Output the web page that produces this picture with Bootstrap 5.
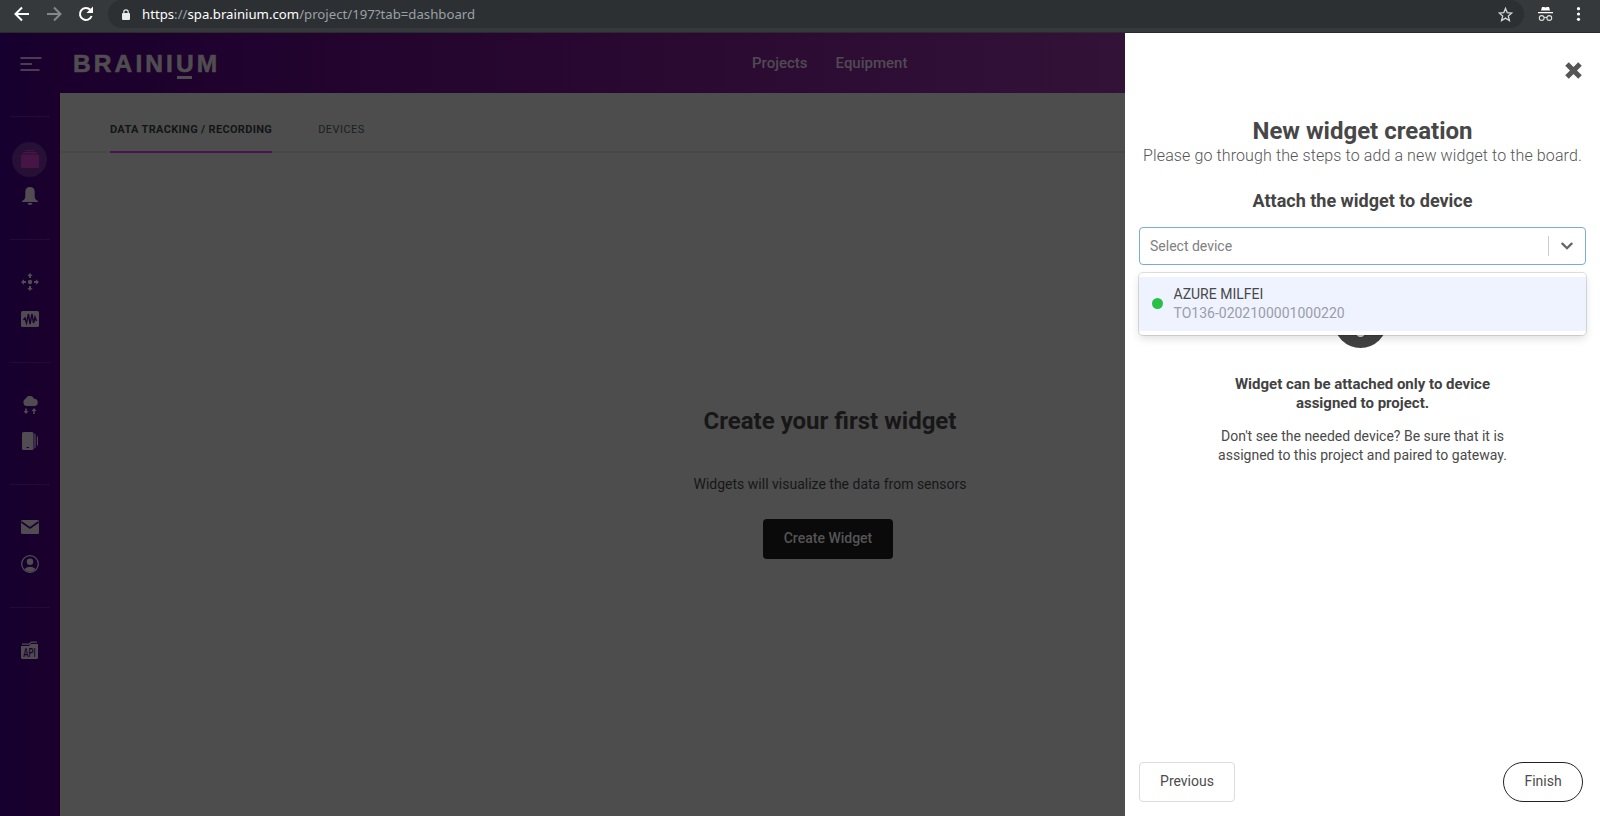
<!DOCTYPE html>
<html lang="en">
<head>
<meta charset="utf-8">
<title>Brainium</title>
<link rel="stylesheet" href="https://cdn.jsdelivr.net/npm/bootstrap@5.3.0/dist/css/bootstrap.min.css">
<script src="https://cdn.jsdelivr.net/npm/bootstrap@5.3.0/dist/js/bootstrap.bundle.min.js"></script>
<style>
body{font-family:Roboto,sans-serif;font-size:14px;color:#424242;height:816px;background:#4d4d4d}
svg{display:block;flex:none}
.browser{height:33px;background:#36393b;border-bottom:1px solid #2a2b2a;padding:0 14px 4px 14px}
.omni{background:#2d3033;height:28px;border-radius:14px;margin-left:14px;padding:0 11px 0 14px;width:1416px}
.url{font:13.2px/28px "Noto Sans",sans-serif;color:#9aa0a6;margin-left:12px;white-space:nowrap}
.url b{font-weight:400;color:#fff}
.incognito{margin-left:14px}
.rail{width:60px;background:linear-gradient(90deg,#16002f,#1b002c)}
.rail-top{height:83px;padding:24px 0 0 2px}
.rail-group{height:123px;width:40px;border-top:1px solid #230b35;padding-top:24px}
.rail-group.short{height:122px}
.rail-item{height:36px;margin-bottom:1px}
.on{width:35px;height:35px;background:#261036;border-radius:50%;margin-right:1px}
.topbar{height:60px;background:linear-gradient(90deg,#1b002d,#27072f 45%,#331238);padding-left:13px}
.brand-name{font:700 24.500px/30px "Liberation Sans",sans-serif;color:#504d51;-webkit-text-stroke:.6px #504d51;letter-spacing:3.100px;width:146px;padding-top:1px}
.u-line{position:relative}
.u-line::after{content:"";position:absolute;left:1px;width:15px;bottom:-2px;height:2.5px;background:#504d51}
.top-nav{margin-left:533px;gap:28px}
.top-link{font-size:15px;font-weight:500;color:#504b52;line-height:20px}
.tabs{height:60px;border-bottom:2px solid #484848;padding-left:50px;gap:46px;font-size:11px;letter-spacing:.45px;color:#1b1e1e}
.tab{height:60px;line-height:73px;white-space:nowrap}
.tab.sel{font-weight:700;border-bottom:2px solid #461450;color:#111615;letter-spacing:.33px}
.empty{padding-top:253px;width:1540px;text-align:center;color:#171717}
.empty h1{font-size:24px;line-height:30px;font-weight:700;margin:0 0 38px}
.empty p{line-height:20px;margin:0 0 25px}
.create{background:#0a0a0a;color:#555;width:130px;height:40px;border:0;border-radius:4px;font-size:14px;font-weight:500;padding:0 0 1px;margin-right:4px}
.drawer{width:475px;flex:none;background:#fff;padding:85px 14px 14px;position:relative}
.close-x{position:absolute;right:18px;top:28.500px}
.drawer h2{font-size:24px;line-height:26px;font-weight:700;margin:0;color:#474747}
.lead-in{font-size:16px;line-height:24px;font-weight:300;color:#555;letter-spacing:.11px;white-space:nowrap;margin:0 -14px 21px}
.drawer h3{font-size:18px;line-height:24px;font-weight:700;margin:0 0 14px;color:#444}
.picker{position:relative;height:38px;border:1px solid #7aabda;border-radius:4px;padding-left:10px;color:#808080}
.picker .chev{border-left:1px solid #ccc;height:20px;width:37px}
.options{position:absolute;top:45px;left:-1px;right:-1px;height:62px;background:#fff;border-radius:4px;box-shadow:0 0 0 1px rgba(0,0,0,.12),0 4px 9px rgba(0,0,0,.12);padding:4px 0;z-index:2}
.option{background:#eff3ff;height:54px;line-height:19px;padding-left:13px;gap:10.500px}
.device-name{color:#484848}
.device-id{color:#9a9daa}
.dot{width:11px;height:11px;border-radius:50%;background:#28c048;margin-bottom:1px}
.info{margin:30px 4px 0 0}
.strong-note{font-size:15px;line-height:19px;font-weight:700;margin:27px 0 14px}
.soft-note{line-height:19px;margin:0;color:#4a4a4a}
.act{height:40px;border:1px solid #dcdcdc;border-radius:4px;background:#fff;color:#4c4c4c;font-size:14px;padding:0 0 1px;width:96px}
.act.done{border-color:#222;border-radius:20px;width:80px;margin-right:3px}
</style>
</head>
<body class="d-flex flex-column overflow-hidden">
<div class="browser d-flex align-items-center">
  <svg width="16" height="16" viewBox="0 0 16 16" fill="none" stroke="#fff" stroke-width="2"><path d="M15 8H2M8 1.500 1.500 8 8 14.500"/></svg>
  <svg class="ms-3" width="16" height="16" viewBox="0 0 16 16" fill="none" stroke="#85888a" stroke-width="2"><path d="M1 8h13M8 1.500 14.500 8 8 14.500"/></svg>
  <svg class="ms-3" width="16" height="16" viewBox="0 0 16 16" fill="none" stroke="#fff" stroke-width="2"><path d="M13.600 10a6 6 0 1 1-1.300-6.200"/><path d="M15 .5V7H8.500z" fill="#fff" stroke="none"/></svg>
  <div class="omni d-flex align-items-center">
    <svg width="8" height="11" viewBox="0 0 8 11"><rect y="4" width="8" height="7" rx="1" fill="#e8eaed"/><path d="M1.800 4.500V3a2.200 2.200 0 0 1 4.400 0v1.500" fill="none" stroke="#e8eaed" stroke-width="1.200"/></svg>
    <span class="url"><b>https</b>://<b>spa.brainium.com</b>/project/197?tab=dashboard</span>
    <svg class="ms-auto" width="15" height="15" viewBox="0 0 15 15" fill="none" stroke="#d0d3d6" stroke-width="1.300"><path d="m7.500 1.400 1.700 4.200 4.600.4-3.500 3 1.100 4.500-3.900-2.400-3.900 2.400L4.700 9 1.200 6l4.600-.4z"/></svg>
  </div>
  <svg class="incognito" width="15" height="14" viewBox="0 0 15 14"><path d="M4 0h2l1.500.6L9 0h2l1 3.500H3zM0 5h15v1.300H0z" fill="#fff"/><g fill="none" stroke="#e0e0e0" stroke-width="1.100"><circle cx="3.700" cy="11" r="2.400"/><circle cx="11.300" cy="11" r="2.400"/><path d="M6 10.700q1.500-1 3 0"/></g></svg>
  <svg class="ms-auto" width="14" height="14" viewBox="0 0 14 14" fill="#fff"><circle cx="6.500" cy="1.700" r="1.600"/><circle cx="6.500" cy="7" r="1.600"/><circle cx="6.500" cy="12.300" r="1.600"/></svg>
</div>
<div class="d-flex flex-grow-1">
  <nav class="rail d-flex flex-column align-items-center flex-shrink-0">
    <div class="rail-top">
      <svg width="22" height="14" viewBox="0 0 22 14" stroke="#5a525f" stroke-width="1.700"><path d="M.5 1h21M.5 7h11.500M.5 13h19"/></svg>
    </div>
    <div class="rail-group">
      <div class="rail-item d-flex align-items-center justify-content-center"><span class="on d-flex align-items-center justify-content-center"><svg width="18" height="18" viewBox="0 0 18 18" fill="#461445"><rect y="4.500" width="18" height="13.500" rx="1.500"/><path d="M2.500 2h13l1 1.500h-15zM5 0h8l.6 1H4.400z"/></svg></span></div>
      <div class="rail-item d-flex align-items-center justify-content-center"><svg width="16" height="18" viewBox="0 0 16 18" fill="#504c52"><path d="M8 0c3 0 4.700 2 4.700 4.500V9c0 3 1.300 4 3.300 5v1H0v-1c2-1 3.300-2 3.300-5V4.500C3.300 2 5 0 8 0zM5.500 16h5q-.5 2-2.500 2t-2.500-2z"/></svg></div>
    </div>
    <div class="rail-group">
      <div class="rail-item d-flex align-items-center justify-content-center"><svg width="18" height="18" viewBox="0 0 18 18" fill="#504c52"><circle cx="9" cy="9" r="2.200"/><path d="m9 0 2.700 3H10v2H8V3H6.300zM9 18l-2.700-3H8v-2h2v2h1.700zM0 9l3-2.700V8h2v2H3v1.700zM18 9l-3 2.700V10h-2V8h2V6.300z"/></svg></div>
      <div class="rail-item d-flex align-items-center justify-content-center"><svg width="18" height="16" viewBox="0 0 18 16"><rect width="18" height="16" rx="1.500" fill="#504c52"/><path d="m2.500 9 1.500-2 1.500 5 2-9 1.500 10 2-10 1.500 9L14 6l1.500 4" fill="none" stroke="#1b0030" stroke-width="1.400"/></svg></div>
    </div>
    <div class="rail-group short">
      <div class="rail-item d-flex align-items-center justify-content-center"><svg width="16" height="18" viewBox="0 0 16 18" fill="#504c52"><path d="M4 10a4 4 0 0 1-.2-7.500 4.500 4.500 0 0 1 8.300.3A3.600 3.600 0 0 1 12.300 10zM3.200 12.500h1.600V15h1.700L4 18l-2.500-3h1.700zM11.200 18h1.600v-3h1.700L12 12l-2.500 3h1.700z"/></svg></div>
      <div class="rail-item d-flex align-items-start justify-content-center pt-2"><svg width="16" height="18" viewBox="0 0 16 18"><rect width="11.500" height="18" rx="1.500" fill="#504c52"/><path d="M4.500 15.500h2.500" stroke="#1b0030"/><path d="M12 1.500q2 0 2 1.500v12q0 1.500-2 1.500z" fill="#3d2c49"/><path d="M15.400 4.500v9" stroke="#514958" stroke-width="1.100"/></svg></div>
    </div>
    <div class="rail-group">
      <div class="rail-item d-flex align-items-center justify-content-center"><svg width="18" height="14" viewBox="0 0 18 14"><rect width="18" height="14" rx="1.500" fill="#504c52"/><path d="m.5 2 8.500 6L17.500 2" fill="none" stroke="#1b0030" stroke-width="1.700"/></svg></div>
      <div class="rail-item d-flex align-items-center justify-content-center"><svg width="18" height="18" viewBox="0 0 18 18"><circle cx="9" cy="9" r="8.300" fill="none" stroke="#504c52" stroke-width="1.300"/><circle cx="9" cy="6.800" r="3.200" fill="#504c52"/><path d="M3.300 14q5.700-4.500 11.400 0-5.700 6-11.400 0z" fill="#504c52"/></svg></div>
    </div>
    <div class="rail-group">
      <div class="rail-item d-flex align-items-center justify-content-center"><svg width="18" height="18" viewBox="0 0 18 18"><path d="M0 5h8l2-2h7v13.500a1.500 1.500 0 0 1-1.500 1.500h-14A1.500 1.500 0 0 1 0 16.500zM1 2.500h7L10 .500h6v1.200H10.500l-2 2H1z" fill="#504c52"/><text x="2.300" y="16" textLength="12.400" lengthAdjust="spacingAndGlyphs" font-family="Roboto" font-weight="500" font-size="12" fill="#1b0030">API</text></svg></div>
    </div>
  </nav>
  <main class="flex-grow-1" style="min-width:0">
    <header class="topbar d-flex align-items-center">
      <div class="brand-name">BRAINI<span class="u-line">U</span>M</div>
      <div class="top-nav top-link d-flex"><span>Projects</span><span>Equipment</span></div>
    </header>
    <div class="tabs d-flex"><span class="tab sel">DATA TRACKING / RECORDING</span><span class="tab">DEVICES</span></div>
    <section class="empty">
      <h1>Create your first widget</h1>
      <p>Widgets will visualize the data from sensors</p>
      <button class="btn create">Create Widget</button>
    </section>
  </main>
  <aside class="drawer d-flex flex-column text-center">
    <svg class="close-x" width="17" height="17" viewBox="0 0 17 17" stroke="#555" stroke-width="5"><path d="m2 2 13 13M15 2 2 15"/></svg>
    <h2>New widget creation</h2>
    <p class="lead-in">Please go through the steps to add a new widget to the board.</p>
    <h3>Attach the widget to device</h3>
    <div class="picker d-flex align-items-center justify-content-between">
      <span>Select device</span>
      <span class="chev d-flex align-items-center justify-content-center"><svg width="12" height="8" viewBox="0 0 12 8" fill="none" stroke="#666" stroke-width="2.300" stroke-linecap="round"><path d="m1.400 1.600 4.600 4.600 4.600-4.600"/></svg></span>
      <div class="options"><div class="option d-flex align-items-center text-start"><i class="dot"></i><div><div class="device-name">AZURE MILFEI</div><div class="device-id">TO136-0202100001000220</div></div></div></div>
    </div>
    <svg class="info align-self-center" width="53" height="53" viewBox="0 0 53 53"><circle cx="26.500" cy="26.500" r="26.500" fill="#424242"/><circle cx="26.500" cy="37.500" r="4.500" fill="#ddd"/></svg>
    <p class="strong-note">Widget can be attached only to device<br>assigned to project.</p>
    <p class="soft-note">Don't see the needed device? Be sure that it is<br>assigned to this project and paired to gateway.</p>
    <div class="d-flex justify-content-between mt-auto"><button class="btn act">Previous</button><button class="btn act done">Finish</button></div>
  </aside>
</div>
</body>
</html>
